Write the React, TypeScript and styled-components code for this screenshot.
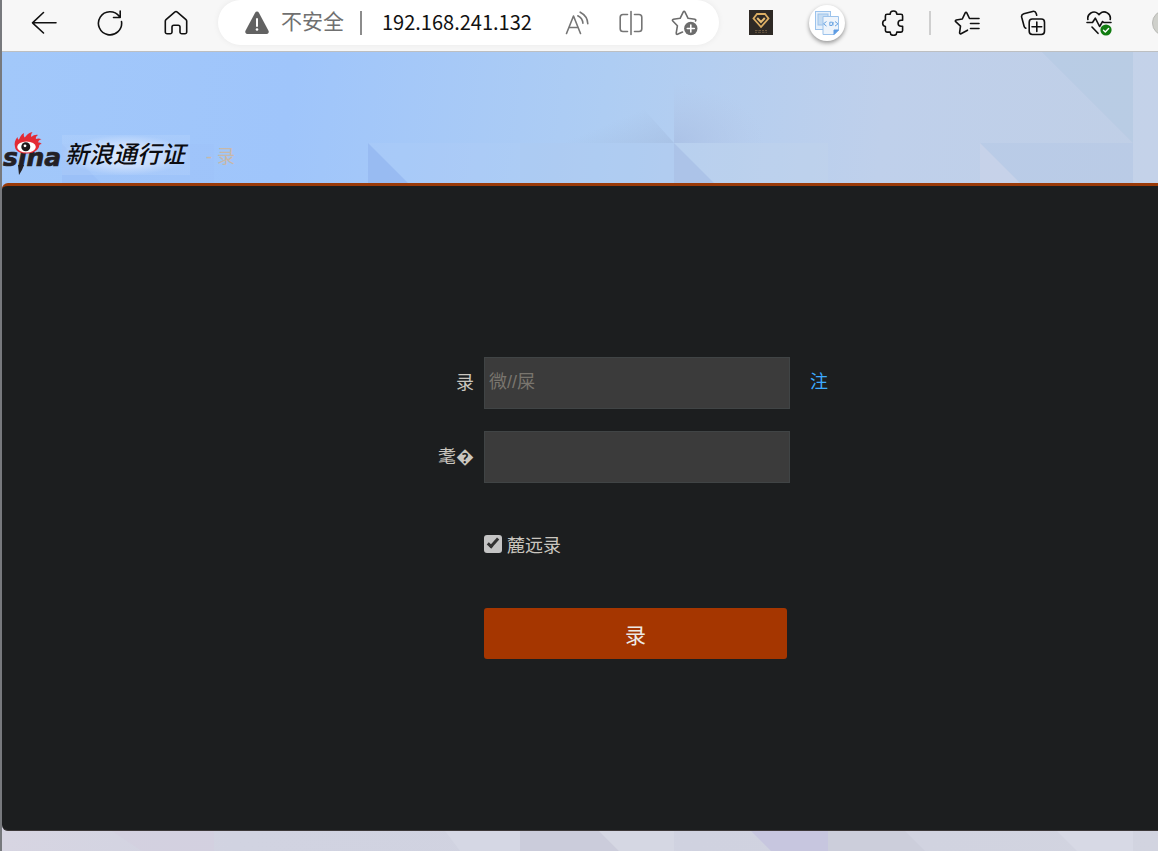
import React from "react";
import styled, { createGlobalStyle } from "styled-components";

const GlobalStyle = createGlobalStyle`
  *, *::before, *::after { box-sizing: border-box; }
  body {
    margin: 0;
    font-family: "Liberation Sans", "Noto Sans CJK SC", sans-serif;
    font-size: 18px;
    background: #d2d4e1;
  }
  button, input { font: inherit; }
`;

const Shell = styled.div`
  min-height: 100vh;
  display: flex;
  flex-direction: column;
  border-left: 2px solid #77797d;
  overflow: hidden;
`;

const Toolbar = styled.nav`
  display: flex;
  align-items: flex-start;
  height: 52px;
  padding-left: 9px;
  background: #f7f7f7;
  border-bottom: 1px solid #bdbfc1;
`;

const ToolButton = styled.button<{ $width?: number; $tone?: string }>`
  flex: none;
  display: flex;
  align-items: center;
  justify-content: center;
  width: ${(p) => p.$width ?? 66}px;
  height: 45px;
  padding: 0;
  border: 0;
  background: none;
  color: ${(p) => p.$tone ?? "#111"};
`;

const ToolDivider = styled.span`
  flex: none;
  width: 2px;
  height: 24px;
  margin: 11px 3px 0;
  background: #cfcfcf;
`;

const AddressBar = styled.div`
  flex: 1;
  min-width: 0;
  display: flex;
  align-items: center;
  height: 45px;
  margin: 0 9px;
  padding: 0 7px 0 26px;
  border-radius: 23px;
  background: #fff;
  box-shadow: 0 0 6px rgba(0, 0, 0, 0.06);
`;

const Security = styled.span`
  flex: none;
  display: flex;
  align-items: center;
  gap: 11px;
  padding-right: 16px;
  margin-right: 20px;
  color: #707070;
  font-size: 21px;
  line-height: 24px;
  border-right: 2px solid #8c8c8c;
`;

const SecurityText = styled.span`
  line-height: 22px;
  padding-bottom: 2px;
`;

const AddressInput = styled.input`
  flex: 1;
  min-width: 0;
  padding: 0 0 2px;
  border: 0;
  outline: 0;
  background: none;
  color: #111;
  font-family: "Noto Sans CJK SC", sans-serif;
  font-size: 20px;
`;

const RoundExtension = styled.span`
  display: flex;
  align-items: center;
  justify-content: center;
  width: 36px;
  height: 36px;
  border-radius: 50%;
  background: #fff;
  box-shadow: 0 2px 4px rgba(0, 0, 0, 0.4);
`;

const Avatar = styled.span`
  width: 26px;
  height: 26px;
  border-radius: 50%;
  background: #cfd0cb;
  border: 1px solid #b9bab6;
`;

const ProfileButton = styled(ToolButton)`
  margin-right: -40px;
`;

const Header = styled.header`
  position: relative;
  display: flex;
  align-items: flex-end;
  height: 131px;
  padding-bottom: 8px;
  background: linear-gradient(97deg, #a2c8fa 0%, #9fc5fb 25%, #aecdf3 52%, #bfd0eb 76%, #c0cfe6 100%);
`;

const Facets = styled.svg`
  position: absolute;
  inset: 0;
  width: 100%;
  height: 100%;
`;

const Brand = styled.a`
  position: relative;
  display: flex;
  align-items: flex-end;
  color: #0c0c10;
  text-decoration: none;
`;

const BrandName = styled.span`
  width: 128px;
  padding-left: 3px;
  font-size: 24px;
  font-weight: 500;
  font-style: italic;
  line-height: 40px;
  white-space: nowrap;
  background: radial-gradient(closest-side, rgba(228, 238, 254, 0.95), rgba(214, 229, 253, 0.7) 60%, rgba(200, 222, 253, 0.2));
`;

const PageTitle = styled.span`
  position: relative;
  margin-left: 16px;
  color: #c8b8a8;
  font-size: 18px;
  line-height: 36px;
`;

const PanelBackdrop = styled.div`
  background: linear-gradient(#a5c6f8, #d6d5e2);
`;

const Panel = styled.main`
  display: flex;
  justify-content: center;
  padding: 171px 16px;
  border-top: 3px solid #9a3a08;
  border-bottom: 1px solid #3c3839;
  border-radius: 6px 0 0 6px;
  background: #1c1e1f;
`;

const Form = styled.form`
  display: grid;
  grid-template-columns: 144px 306px 30px;
  column-gap: 10px;
  color: #cac6bf;
`;

const Label = styled.label`
  height: 52px;
  text-align: right;
  font-family: "Noto Sans CJK SC", sans-serif;
  line-height: 48px;
`;

const Field = styled.input`
  grid-column: 2;
  height: 52px;
  margin-bottom: 22px;
  padding: 0 4px 2px;
  border: 1px solid #404445;
  border-radius: 0;
  outline: 0;
  background: #3b3b3b;
  color: #e8e6e3;
  &::placeholder { color: #79756e; opacity: 1; }
`;

const RegisterLink = styled.a`
  margin-left: 10px;
  color: #3caaff;
  line-height: 50px;
  text-decoration: none;
`;

const Remember = styled.label`
  grid-column: 2;
  display: flex;
  align-items: center;
  gap: 5px;
  height: 28px;
  margin: 25px 0 50px;
`;

const Checkbox = styled.input`
  appearance: none;
  display: flex;
  justify-content: center;
  width: 18px;
  height: 18px;
  margin: 0;
  border-radius: 3px;
  background: #c4c4c4;
  &:checked::after {
    content: "";
    width: 6px;
    height: 12px;
    margin-top: 1px;
    border: solid #333;
    border-width: 0 3px 3px 0;
    transform: rotate(42deg);
  }
`;

const Submit = styled.button`
  grid-column: 2;
  width: 303px;
  height: 51px;
  padding: 0;
  border: 0;
  border-radius: 3px;
  background: #a53600;
  color: #ece9e6;
  font-size: 21px;
`;

const Footer = styled.footer`
  position: relative;
  flex: 1;
  min-height: 20px;
  background: linear-gradient(90deg, #d7d5e2, #d1d3e1 20%, #d0d2e0 60%, #d2d4e0);
`;

const line = { fill: "none", stroke: "currentColor", strokeWidth: 1.6, strokeLinecap: "round", strokeLinejoin: "round" } as const;

const BackIcon = () => (
  <svg width="26" height="24" viewBox="0 0 26 24" {...line}><path d="M12.5 1.5 1.5 11.800l11 10.200M1.500 11.800H25" /></svg>
);
const ReloadIcon = () => (
  <svg width="26" height="26" viewBox="0 0 26 26" {...line}><path d="M24.500 11.500A11.600 11.600 0 1 1 22.300 6.300M23.200 1v6.500h-6.700" /></svg>
);
const HomeIcon = () => (
  <svg width="24" height="26" viewBox="0 0 24 26" {...line}>
    <path d="M2 9.600 10.700 2.100a2 2 0 0 1 2.600 0L22 9.600a2 2 0 0 1 .700 1.500V22a1.800 1.800 0 0 1-1.800 1.800h-3.100A1.800 1.800 0 0 1 16 22v-5a1.800 1.800 0 0 0-1.800-1.800H9.800A1.800 1.800 0 0 0 8 17v5a1.800 1.800 0 0 1-1.800 1.800H3.100A1.800 1.800 0 0 1 1.300 22V11.100A2 2 0 0 1 2 9.600Z" />
  </svg>
);
const WarningIcon = () => (
  <svg width="26" height="24" viewBox="0 0 26 24">
    <path d="M11.100 1.700a2.200 2.200 0 0 1 3.800 0l9.600 18.100a2.200 2.200 0 0 1-1.900 3.200H3.400a2.200 2.200 0 0 1-1.900-3.200Z" fill="#626262" />
    <path d="M13 8v7" stroke="#fff" strokeWidth="2" strokeLinecap="round" /><circle cx="13" cy="18.500" r="1.300" fill="#fff" />
  </svg>
);
const ReadAloudIcon = () => (
  <svg width="24" height="24" viewBox="0 0 24 24" {...line}>
    <path d="M1.500 22.500 8.500 5l7 17.500M4 16.500h9M15.200 1.200c4.600 2.400 7.400 6.200 7.600 11.500M12.800 4.800c3 1.500 4.900 4 5.100 7.500" />
  </svg>
);
const SplitIcon = () => (
  <svg width="24" height="26" viewBox="0 0 24 26" {...line}>
    <path d="M12 1.500v23M8.500 4.500H4A2.800 2.800 0 0 0 1.200 7.300v11.400A2.800 2.800 0 0 0 4 21.500h4.500M15.500 4.500H20a2.800 2.800 0 0 1 2.800 2.800v11.400a2.800 2.800 0 0 1-2.800 2.800h-4.500" />
  </svg>
);
const AddFavoriteIcon = () => (
  <svg width="28" height="28" viewBox="0 0 28 28" {...line}>
    <path d="M11.500 23 6.500 25.300c-.8.300-1.500-.2-1.300-1.100l1.200-7.400L1.800 12c-.7-.7-.4-1.500.6-1.700l6.700-1 3.200-6.400c.4-.8 1.200-.8 1.600 0l3.200 6.400 6.800 1c.9.200 1.200.9.600 1.600" />
    <circle cx="19.800" cy="19.500" r="6.700" fill="currentColor" stroke="none" />
    <path d="M19.800 16v7M16.300 19.500h7" stroke="#fff" />
  </svg>
);
const DiamondIcon = () => (
  <svg width="24" height="25" viewBox="0 0 24 25">
    <rect width="24" height="25" fill="#2e2925" />
    <path d="M8 4h8l3.500 4.500L12 17 4.500 8.500Z" fill="none" stroke="#dcae63" strokeWidth="1.800" />
    <path d="m8.200 8 3.800 4 3.800-4" fill="none" stroke="#e6bc74" strokeWidth="2" />
    <path d="M6 20.500h2.500m1 0H12m1 0h2m1 0h2M6 22.300h2m1 0h3m1 0h2.500m1 0H18" stroke="#6a5840" />
  </svg>
);
const CodePagesIcon = () => (
  <svg width="26" height="26" viewBox="0 0 26 26" fill="none" stroke="#9cc3ec">
    <rect x="1.500" y="1.500" width="15" height="18" fill="#e6f0fb" />
    <rect x="4" y="4" width="10" height="11" fill="#c6dcf2" />
    <path d="M9 6.500h15.500V20L20 24.500H9Z" fill="#eef4fb" />
    <path d="M24.500 20H20v4.500Z" fill="#5d9be3" stroke="#5d9be3" />
    <path d="m12.500 11.500-3 2.300 3 2.300M21 11.500l3 2.300-3 2.300M18.500 12.200h-2.700v3.300h2.200l1-3.300v3.300" stroke="#6aa4e2" />
  </svg>
);
const PuzzleIcon = () => (
  <svg width="24" height="26" viewBox="0 0 24 26" {...line}>
    <path d="M9.200 4.300a3.300 3.300 0 0 1 6.600 0H20a1.600 1.600 0 0 1 1.600 1.600v4.300h-1.500a3 3 0 0 0 0 6h1.500v4.300a1.600 1.600 0 0 1-1.600 1.600h-4.200a3.300 3.300 0 0 1-6.600 0H6a1.600 1.600 0 0 1-1.600-1.600v-4a3.300 3.300 0 0 1 0-6.500V5.900A1.600 1.600 0 0 1 6 4.300Z" />
  </svg>
);
const FavoritesIcon = () => (
  <svg width="26" height="26" viewBox="0 0 26 26" {...line}>
    <path d="M13.500 20.200 7 23.700c-.8.400-1.500-.1-1.400-1l.9-6.500-4.800-4.500c-.7-.7-.4-1.500.6-1.700l6-1 2.900-6.200c.4-.8 1.200-.8 1.600 0L15.500 8.500M16.500 8.500H25M16.500 13.500H25M16.500 18.500H25" />
  </svg>
);
const CollectionsIcon = () => (
  <svg width="26" height="26" viewBox="0 0 26 26" {...line}>
    <rect x="9.200" y="9" width="15.300" height="15.500" rx="3.200" />
    <path d="M16.800 12v9.500M12 16.800h9.700M5.800 18.200a3 3 0 0 1-1.700-2L1.700 7.300a3 3 0 0 1 2.100-3.600l8.800-2.300a3 3 0 0 1 3.600 2.100l.5 1.700" />
  </svg>
);
const HealthIcon = () => (
  <svg width="26" height="26" viewBox="0 0 26 26" {...line}>
    <path d="M1.900 9.500A6.200 6.200 0 0 1 12 3.600l1 1 1-1a6.200 6.200 0 0 1 10.200 5.900M1 12.500h5.500l2.800-4.300 4.300 8.300 3-5 1.200 1H25M6 17l6 6.300" />
    <circle cx="20" cy="20" r="5.600" fill="#107c10" stroke="none" />
    <path d="m17.500 20.200 1.800 1.700 3.300-3.500" stroke="#fff" strokeWidth="1.400" />
  </svg>
);

const SinaLogo = () => (
  <svg width="60" height="44" viewBox="0 0 60 44" role="img" aria-label="sina">
    <text x="1" y="35" fontFamily="DejaVu Sans, sans-serif" fontSize="25" fontWeight="700" fontStyle="italic" fill="#232025" stroke="#232025" strokeWidth="0.7">sina</text>
    <path d="M16 34h6l-2 5-3 5Z" fill="#232025" />
    <path d="M13 16C12 12 13 9 15.500 6c.2 2 .7 2.500 1.500 2.500C18 6 19 3.500 22 2c-.5 2.500-.2 3.500.8 4.500C24.500 4 27 1.500 30.500 1c-1.500 2.300-1.800 3.500-1 5 1.700-1.500 4-2.500 6.500-2-2 1.300-2.500 2.500-2 4 1.700-.7 3.500-.7 5.500.2-2.500.7-3.300 1.800-3.300 3.300 1.500 0 2.500.3 3.500 1.500-2 0-2.700 1-2.700 3C35 20.500 30 22.500 24 22.500S13.500 20 13 16Z" fill="#e32b35" />
    <ellipse cx="24.500" cy="16" rx="9.300" ry="5.500" fill="#fff" />
    <circle cx="23.800" cy="15.800" r="4.500" fill="#1b1719" />
    <circle cx="23" cy="14.800" r="1.400" fill="#fff" />
  </svg>
);

export default function App() {
  return (
    <Shell>
      <GlobalStyle />
      <Toolbar aria-label="浏览器">
        <ToolButton aria-label="返回"><BackIcon /></ToolButton>
        <ToolButton aria-label="刷新"><ReloadIcon /></ToolButton>
        <ToolButton aria-label="主页"><HomeIcon /></ToolButton>
        <AddressBar>
          <Security><WarningIcon /><SecurityText>不安全</SecurityText></Security>
          <AddressInput aria-label="地址" defaultValue="192.168.241.132" />
          <ToolButton $width={54} $tone="#757575" aria-label="大声朗读"><ReadAloudIcon /></ToolButton>
          <ToolButton $width={54} $tone="#757575" aria-label="分屏"><SplitIcon /></ToolButton>
          <ToolButton $width={54} $tone="#6c6c6c" aria-label="添加收藏"><AddFavoriteIcon /></ToolButton>
        </AddressBar>
        <ToolButton aria-label="扩展一"><DiamondIcon /></ToolButton>
        <ToolButton aria-label="扩展二"><RoundExtension><CodePagesIcon /></RoundExtension></ToolButton>
        <ToolButton aria-label="扩展"><PuzzleIcon /></ToolButton>
        <ToolDivider />
        <ToolButton aria-label="收藏夹"><FavoritesIcon /></ToolButton>
        <ToolButton aria-label="集锦"><CollectionsIcon /></ToolButton>
        <ToolButton aria-label="浏览器概要"><HealthIcon /></ToolButton>
        <ProfileButton aria-label="个人资料"><Avatar /></ProfileButton>
      </Toolbar>

      <Header>
        <Facets viewBox="0 0 1156 131" preserveAspectRatio="xMinYMin slice" aria-hidden="true">
          <defs>
            <linearGradient id="shade" x1="0" x2="1" y1="0" y2="1">
              <stop offset="0.5" stopColor="#a3bce0" stopOpacity="0" />
              <stop offset="1" stopColor="#a3bce0" stopOpacity="0.6" />
            </linearGradient>
            <radialGradient id="shadeRight" cx="0" cy="1" r="1">
              <stop offset="0" stopColor="#a8bde2" stopOpacity="0.7" />
              <stop offset="1" stopColor="#b4c4e4" stopOpacity="0" />
            </radialGradient>
          </defs>
          <path d="M60 92h152v39H60Z" fill="#9cbff8" opacity="0.15" />
          <path d="M60 92v39h39Z" fill="#94b8f4" opacity="0.4" />
          <path d="M366 91v40h40Z" fill="#97b8f1" opacity="0.85" />
          <path d="M366 91h152v40H406Z" fill="#b2cff6" opacity="0.25" />
          <path d="M630 44 672 91H560Z" fill="url(#shade)" />
          <path d="M672 31h90v60h-90Z" fill="url(#shadeRight)" />
          <path d="M518 91h154v40H518Z" fill="#b0cbf1" opacity="0.4" />
          <path d="M672 91v40h40Z" fill="#a6bde3" opacity="0.6" />
          <path d="M672 91h154v40H712Z" fill="#c3d4ec" opacity="0.35" />
          <path d="M1040 0h91v91Z" fill="#b4c9e3" opacity="0.6" />
          <path d="M1131 0h25v131h-25Z" fill="#c8d6eb" opacity="0.5" />
          <path d="M978 91h153v40H1018Z" fill="#b4c7e5" opacity="0.5" />
          <path d="M978 91v40h40Z" fill="#c8d2e8" opacity="0.8" />
        </Facets>
        <Brand href="#"><SinaLogo /><BrandName>新浪通行证</BrandName></Brand>
        <PageTitle>- 录</PageTitle>
      </Header>

      <PanelBackdrop>
        <Panel>
          <Form onSubmit={(e) => e.preventDefault()}>
            <Label htmlFor="account">录</Label>
            <Field id="account" placeholder="微//屎" />
            <RegisterLink href="#">注</RegisterLink>
            <Label htmlFor="password">耄�</Label>
            <Field id="password" type="password" />
            <Remember><Checkbox type="checkbox" defaultChecked />麓远录</Remember>
            <Submit type="submit">录</Submit>
          </Form>
        </Panel>
      </PanelBackdrop>

      <Footer>
        <Facets viewBox="0 0 1156 20" preserveAspectRatio="xMinYMin slice" aria-hidden="true">
          <path d="M110 0h102v20H140Z" fill="#d4cfdf" opacity="0.6" />
          <path d="M443 0h75v20h-60Z" fill="#d6d8e5" opacity="0.8" />
          <path d="M518 0h79l20 20h-99Z" fill="#c9cbd9" opacity="0.8" />
          <path d="M597 0h75v20h-55Z" fill="#d6d8e4" opacity="0.8" />
          <path d="M749 0h77v20h-57Z" fill="#c5c4df" opacity="0.9" />
          <path d="M826 0h77l20 20h-97Z" fill="#cccedb" />
          <path d="M1055 0h76v20h-56Z" fill="#d7d9e5" />
        </Facets>
      </Footer>
    </Shell>
  );
}
